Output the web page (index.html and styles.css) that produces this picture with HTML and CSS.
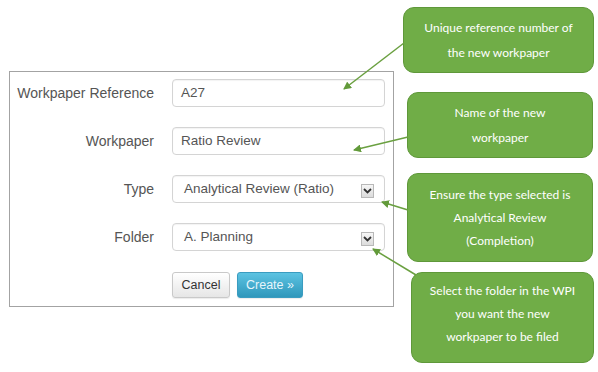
FILE: index.html
```html
<!DOCTYPE html>
<html>
<head>
<meta charset="utf-8">
<link rel="stylesheet" href="styles.css">
</head>
<body>
<div class="stage">
  <form class="panel">
    <label class="lbl">Workpaper Reference</label>
    <div class="field">A27</div>
    <label class="lbl">Workpaper</label>
    <div class="field">Ratio Review</div>
    <label class="lbl">Type</label>
    <div class="field select">Analytical Review (Ratio)<span class="caret"><svg width="9" height="6" viewBox="0 0 9 6"><path d="M1 1 L4.5 4.5 L8 1" fill="none" stroke="#333" stroke-width="1.8"/></svg></span></div>
    <label class="lbl">Folder</label>
    <div class="field select">A. Planning<span class="caret"><svg width="9" height="6" viewBox="0 0 9 6"><path d="M1 1 L4.5 4.5 L8 1" fill="none" stroke="#333" stroke-width="1.8"/></svg></span></div>
    <div class="actions">
      <button type="button" class="btn">Cancel</button>
      <button type="button" class="btn primary">Create »</button>
    </div>
  </form>

  <div class="note n1">Unique reference number of<br>the new workpaper</div>
  <div class="note n2">Name of the new<br>workpaper</div>
  <div class="note n3">Ensure the type selected is<br>Analytical Review<br>(Completion)</div>
  <div class="note n4">Select the folder in the WPI<br>you want the new<br>workpaper to be filed</div>

  <svg class="arrows" width="598" height="372" viewBox="0 0 598 372">
    <defs>
      <marker id="ah" markerWidth="8" markerHeight="8" refX="7" refY="4" orient="auto" markerUnits="userSpaceOnUse">
        <path d="M0 0 L8 4 L0 8 Z" fill="#629a3a"/>
      </marker>
    </defs>
    <g stroke="#6aa040" stroke-width="1.5" fill="none">
      <line x1="404" y1="43" x2="344" y2="89" marker-end="url(#ah)"/>
      <line x1="408" y1="137" x2="354" y2="150" marker-end="url(#ah)"/>
      <line x1="408" y1="210" x2="382" y2="202" marker-end="url(#ah)"/>
      <line x1="416" y1="275" x2="373" y2="249" marker-end="url(#ah)"/>
    </g>
  </svg>
</div>
</body>
</html>
```

FILE: styles.css
```css
html, body {
  margin: 0;
  padding: 0;
  background: #fff;
}
.stage {
  position: relative;
  width: 598px;
  height: 372px;
  overflow: hidden;
  padding-top: 71px;
  box-sizing: border-box;
}
.panel {
  margin: 0 0 0 9px;
  width: 385px;
  height: 236px;
  box-sizing: border-box;
  border: 1px solid #a3a3a3;
  display: grid;
  grid-template-columns: 144px 213px;
  grid-auto-rows: 28px;
  column-gap: 18px;
  row-gap: 20px;
  padding: 7px 0 0 0;
  font-family: "Liberation Sans", Arial, sans-serif;
}
.lbl {
  font-size: 14px;
  color: #555;
  text-align: right;
  line-height: 28px;
}
.field {
  box-sizing: border-box;
  border: 1px solid #d4d4d4;
  border-radius: 4px;
  box-shadow: inset 0 1px 1px rgba(0,0,0,0.05);
  font-size: 13.5px;
  color: #555;
  line-height: 26px;
  padding-left: 8px;
  display: flex;
  align-items: center;
}
.field.select {
  padding-left: 11px;
  justify-content: space-between;
  padding-right: 10px;
}
.caret {
  width: 13px;
  height: 14px;
  box-sizing: border-box;
  border: 1px solid #b8b8b8;
  background: linear-gradient(#f6f6f6, #dcdcdc);
  display: flex;
  align-items: center;
  justify-content: center;
  margin-top: 4px;
}
.caret svg { display: block; }
.actions {
  grid-column: 2;
  display: flex;
  gap: 7px;
  margin-top: 1px;
  height: 26px;
}
.btn {
  font-family: "Liberation Sans", Arial, sans-serif;
  font-size: 12.5px;
  height: 26px;
  width: 58px;
  padding: 0;
  border-radius: 3px;
  border: 1px solid #c9c9c9;
  background: linear-gradient(#ffffff, #e6e6e6);
  color: #333;
  box-shadow: 0 1px 1px rgba(0,0,0,0.08);
}
.btn.primary {
  width: 66px;
  border-color: #3a9cc0;
  background: linear-gradient(#5cc3e2, #2f97bb);
  color: #e6f5fb;
}
.note {
  position: absolute;
  box-sizing: border-box;
  background: #70ad47;
  border: 1px solid #5f983a;
  border-radius: 11px;
  color: #fff;
  font-family: Lato, "Open Sans", sans-serif;
  font-size: 12px;
  text-align: center;
  display: flex;
  align-items: center;
  justify-content: center;
}
.n1 { left: 403px; top: 7px; width: 191px; height: 66px; line-height: 25px; }
.n2 { left: 407px; top: 92px; width: 186px; height: 66px; line-height: 25px; }
.n3 { left: 407px; top: 173px; width: 186px; height: 89px; line-height: 23px; }
.n4 { left: 411px; top: 272px; width: 183px; height: 91px; line-height: 23px; padding-bottom: 8px; }
.arrows {
  position: absolute;
  left: 0;
  top: 0;
  pointer-events: none;
}
```
